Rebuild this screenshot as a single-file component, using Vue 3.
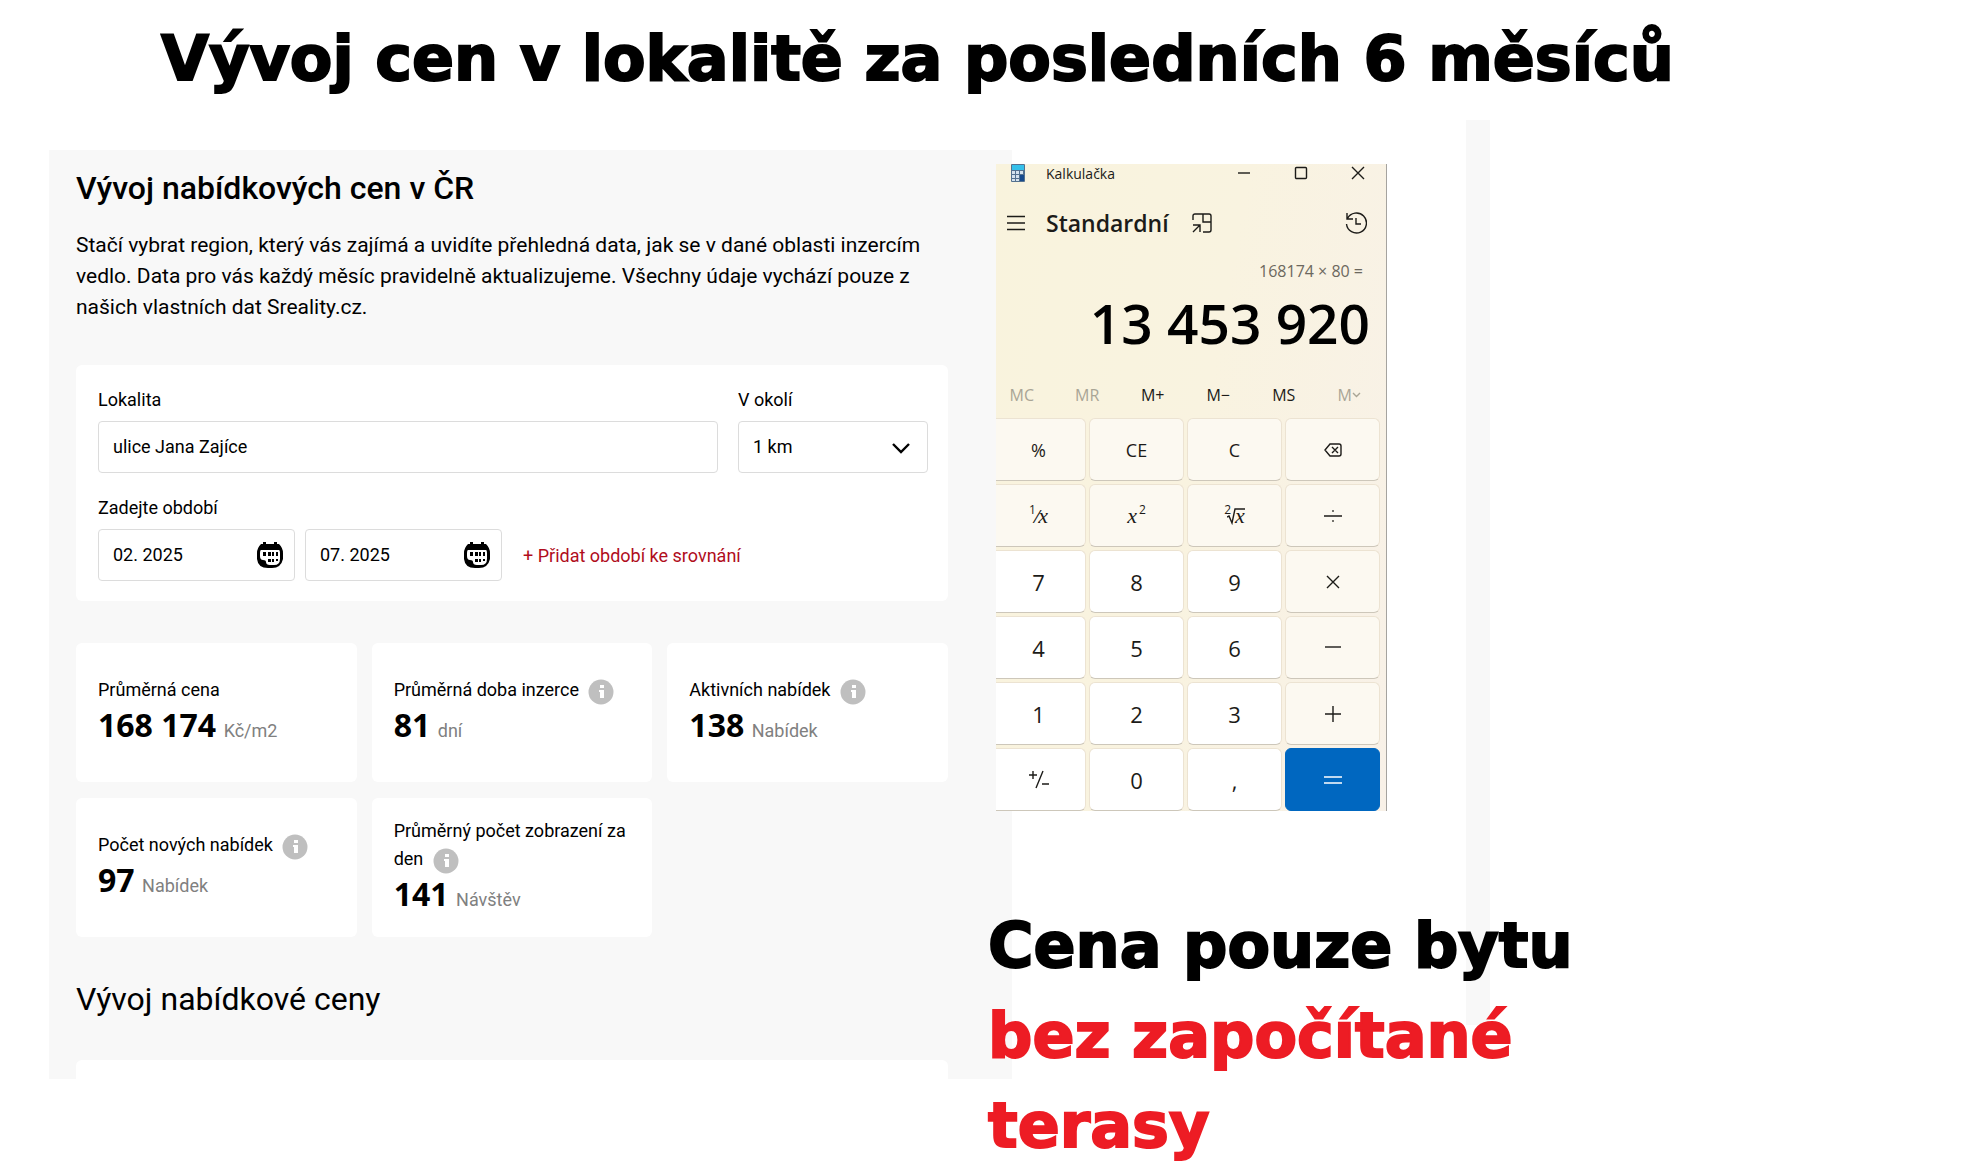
<template>
  <div class="page">
    <h1 class="headline">Vývoj cen v lokalitě za posledních 6 měsíců</h1>

    <div class="board">
      <main class="panel">
        <h2 class="panel-title">Vývoj nabídkových cen v ČR</h2>
        <p class="intro">
          Stačí vybrat region, který vás zajímá a uvidíte přehledná data, jak se v dané oblasti inzercím
          vedlo. Data pro vás každý měsíc pravidelně aktualizujeme. Všechny údaje vychází pouze z
          našich vlastních dat Sreality.cz.
        </p>

        <form class="card filter" @submit.prevent>
          <div class="filter-row">
            <div class="field field-wide">
              <label for="locality">Lokalita</label>
              <input id="locality" v-model="locality" class="control" type="text" />
            </div>
            <div class="field field-radius">
              <label for="radius">V okolí</label>
              <div class="select-wrap">
                <select id="radius" v-model="radius" class="control">
                  <option v-for="r in radiusOptions" :key="r">{{ r }}</option>
                </select>
                <svg class="chevron" viewBox="0 0 18 12" width="18" height="12">
                  <path d="M1 2l8 8 8-8" fill="none" stroke="#000" stroke-width="2.400" />
                </svg>
              </div>
            </div>
          </div>

          <label for="period-0">Zadejte období</label>
          <div class="periods">
            <div v-for="(p, i) in periods" :key="i" class="period">
              <input :id="'period-' + i" v-model="periods[i]" class="control" type="text" :aria-label="i ? 'Konec období' : null" />
              <svg class="calendar" viewBox="0 0 26 26" width="26" height="26">
                <path d="M4 2h2V0h3v2h8V0h3v2h2q4 4 4 9v6q-2 9-11 9h-4Q1 26 0 17v-6q0-5 4-9z" fill="#000" />
                <path d="M4 8h18q1 0 1 3v6q0 6-6 6h-4q-4 0-4-3 0-2-3-2-3 0-3-4v-3q0-3 1-3z" fill="#fff" />
                <path d="M6 10h3v4H6zM11 10h3v4h-3zM15 10h2v4h-2zM19 10h2v4h-2zM11 17h3v3h-3zM15 17h2v3h-2zM19 17h2v2h-2z" fill="#000" />
              </svg>
            </div>
            <a href="#" class="add-period" @click.prevent="addPeriod">+ Přidat období ke srovnání</a>
          </div>
        </form>

        <div class="stats">
          <div v-for="s in stats" :key="s.label" class="card stat">
            <div class="stat-label">
              {{ s.label }}
              <svg v-if="s.info" class="info" viewBox="0 0 26 26" width="26" height="26">
                <circle cx="13" cy="13" r="12.5" fill="#bfbfbf" />
                <path d="M12 6h4v3h-4zM11 11h5v8h-4v-6h-1z" fill="#fff" />
              </svg>
            </div>
            <div class="stat-value">
              <strong>{{ s.value }}</strong> <span>{{ s.unit }}</span>
            </div>
          </div>
        </div>

        <h2 class="chart-title">Vývoj nabídkové ceny</h2>
        <div class="card chart"></div>
      </main>

      <div class="strip"></div>

      <aside class="side">
        <section class="calc">
          <header class="calc-bar">
            <svg class="calc-logo" viewBox="0 0 14 18" width="14" height="18">
              <rect width="14" height="18" rx="1" fill="#54718f" />
              <rect x="1" y="1" width="12" height="5" fill="#35c0ea" />
              <path d="M1 7h3v3H1zM5 7h3v3H5zM9 7h3v3H9zM1 11h3v3H1zM5 11h3v3H5zM1 15h3v2H1zM5 15h3v2H5z" fill="#d5e2ee" />
              <path d="M9 11h4v6H9z" fill="#174a8c" />
            </svg>
            <span class="calc-name">Kalkulačka</span>
            <button class="win-btn" aria-label="Minimalizovat">
              <svg viewBox="0 0 14 14" width="14" height="14"><path d="M1 7h12" /></svg>
            </button>
            <button class="win-btn" aria-label="Maximalizovat">
              <svg viewBox="0 0 14 14" width="14" height="14"><rect x="1.5" y="1.5" width="11" height="11" rx="1" /></svg>
            </button>
            <button class="win-btn" aria-label="Zavřít">
              <svg viewBox="0 0 14 14" width="14" height="14"><path d="M1 1l12 12M13 1L1 13" /></svg>
            </button>
          </header>

          <div class="calc-mode">
            <button class="icon-btn" aria-label="Nabídka">
              <svg viewBox="0 0 20 20" width="20" height="20"><path d="M1 3.500h18M1 10h18M1 16.500h18" /></svg>
            </button>
            <span class="mode-name">Standardní</span>
            <button class="icon-btn" aria-label="Vždy navrchu">
              <svg viewBox="0 0 20 20" width="20" height="20">
                <path d="M1 7V3q0-2 2-2h14q2 0 2 2v14q0 2-2 2h-6M11 1v8h8M1 19l7-7M1 12h7v7" />
              </svg>
            </button>
            <button class="icon-btn history" aria-label="Historie">
              <svg viewBox="0 0 22 22" width="22" height="22">
                <path d="M2 1v6h6M2.500 6.500A10 10 0 1 1 1.500 12M11 6v6h5" />
              </svg>
            </button>
          </div>

          <div class="expression">{{ expression }}</div>
          <output class="display">{{ display }}</output>

          <div class="memory">
            <button v-for="m in memory" :key="m.text" :disabled="m.off">
              {{ m.text }}<svg v-if="m.arrow" viewBox="0 0 9 6" width="9" height="6"><path d="M1 1l3.500 3.500L8 1" /></svg>
            </button>
          </div>

          <div class="keys">
            <button v-for="k in keys" :key="k.id" class="key" :class="k.kind" :aria-label="k.id">
              <svg v-if="k.path" viewBox="0 0 20 20" width="20" height="20"><path :d="k.path" /></svg>
              <template v-else-if="k.id === '1/x'"><sup>1</sup>⁄<i>x</i></template>
              <template v-else-if="k.id === 'x2'"><i>x</i><sup class="pow">2</sup></template>
              <template v-else-if="k.id === 'sqrt'">
                <sup>2</sup>
                <svg class="root" viewBox="0 0 18 18" width="18" height="18"><path d="M0 10l2-1 3 7L8 2h10" /></svg>
                <i>x</i>
              </template>
              <template v-else>{{ k.id }}</template>
            </button>
          </div>
        </section>

        <p class="note">
          Cena pouze bytu<br />
          <span class="red">bez započítané<br />terasy</span>
        </p>
      </aside>
    </div>
  </div>
</template>

<script setup>
import { ref } from 'vue'

const locality = ref('ulice Jana Zajíce')
const radius = ref('1 km')
const radiusOptions = ['1 km', '2 km', '5 km', '10 km']
const periods = ref(['02. 2025', '07. 2025'])

const stats = [
  { label: 'Průměrná cena', value: '168 174', unit: 'Kč/m2' },
  { label: 'Průměrná doba inzerce', value: '81', unit: 'dní', info: true },
  { label: 'Aktivních nabídek', value: '138', unit: 'Nabídek', info: true },
  { label: 'Počet nových nabídek', value: '97', unit: 'Nabídek', info: true },
  { label: 'Průměrný počet zobrazení za den', value: '141', unit: 'Návštěv', info: true },
]

const expression = ref('168174 × 80 =')
const display = ref('13 453 920')

const memory = [
  { text: 'MC', off: true },
  { text: 'MR', off: true },
  { text: 'M+' },
  { text: 'M−' },
  { text: 'MS' },
  { text: 'M', off: true, arrow: true },
]

// Keys with a path are drawn as icons, the rest as text
const keys = [
  { id: '%', kind: 'fn' },
  { id: 'CE', kind: 'fn' },
  { id: 'C', kind: 'fn' },
  { id: 'backspace', kind: 'fn', path: 'M7 4h9q2 0 2 2v8q0 2-2 2H7l-5-6zM9 7l6 6M15 7l-6 6' },
  { id: '1/x', kind: 'fn' },
  { id: 'x2', kind: 'fn' },
  { id: 'sqrt', kind: 'fn' },
  { id: '÷', kind: 'fn', path: 'M1 10h18M9.200 5h1.600M9.200 15h1.600' },
  { id: '7', kind: 'num' },
  { id: '8', kind: 'num' },
  { id: '9', kind: 'num' },
  { id: '×', kind: 'fn', path: 'M4 4l12 12M16 4L4 16' },
  { id: '4', kind: 'num' },
  { id: '5', kind: 'num' },
  { id: '6', kind: 'num' },
  { id: '−', kind: 'fn', path: 'M2 9h16' },
  { id: '1', kind: 'num' },
  { id: '2', kind: 'num' },
  { id: '3', kind: 'num' },
  { id: '+', kind: 'fn', path: 'M2 10h16M10 2v16' },
  { id: '+/−', kind: 'num', path: 'M0 5h8M4 1v8M14 1L7 18M13 14h8' },
  { id: '0', kind: 'num' },
  { id: ',', kind: 'num' },
  { id: '=', kind: 'equals', path: 'M1 7h18M1 13h18' },
]

function addPeriod() {
  periods.value.push('')
}
</script>

<style>
body {
  background: #fff;
}
</style>

<style scoped>
.page {
  font-family: Roboto, "Liberation Sans", sans-serif;
  color: #000;
  overflow: hidden;
}

h1, h2, p {
  margin: 0;
}

.headline,
.note {
  font-family: "DejaVu Sans", sans-serif;
  font-size: 62px;
  font-weight: 700;
  line-height: 90px;
  white-space: nowrap;
  -webkit-text-stroke: 2px currentColor;
}

.headline {
  padding: 14px 0 0 161px;
  height: 106px;
}

.board {
  display: grid;
  grid-template-columns: 963fr 454fr 24px 494fr;
  padding-left: 49px;
}

.panel {
  grid-column: 1;
  grid-row: 1;
  align-self: start;
  margin-top: 30px;
  padding: 18px 64px 0 27px;
  background: #f8f8f8;
}

.panel-title {
  font-size: 32px;
  font-weight: 500;
  line-height: 40px;
}

.intro {
  margin-top: 22px;
  font-size: 21px;
  line-height: 31px;
}

.card {
  background: #fff;
  border-radius: 6px;
}

.filter {
  margin-top: 42px;
  padding: 23px 20px 20px 22px;
  font-size: 18px;
}

.filter-row {
  display: flex;
  gap: 20px;
  margin-bottom: 23px;
}

.field-wide {
  flex: 1;
}

.field-radius {
  flex: 0 0 190px;
}

label {
  display: block;
  line-height: 24px;
  margin-bottom: 9px;
}

.control {
  display: block;
  width: 100%;
  height: 52px;
  box-sizing: border-box;
  padding: 0 14px 2px;
  border: 1px solid #dcdcdc;
  border-radius: 4px;
  background: #fff;
  color: #000;
  font: inherit;
  appearance: none;
}

.select-wrap,
.period {
  position: relative;
}

.chevron {
  position: absolute;
  right: 18px;
  top: 21px;
  pointer-events: none;
}

.periods {
  display: flex;
  align-items: center;
  gap: 10px;
}

.period {
  width: 197px;
}

.calendar {
  position: absolute;
  right: 12px;
  top: 13px;
  pointer-events: none;
}

.add-period {
  margin-left: 11px;
  color: #b00d1c;
  text-decoration: none;
}

.stats {
  display: grid;
  grid-template-columns: repeat(3, 1fr);
  grid-auto-rows: 139px;
  gap: 16px 15px;
  margin-top: 42px;
}

.stat {
  display: flex;
  flex-direction: column;
  justify-content: center;
  padding: 2px 16px 0 22px;
}

.stat-label {
  font-size: 18px;
  line-height: 28px;
}

.info {
  margin: -8px 0 -8px 5px;
  vertical-align: -1px;
}

.stat-value {
  font-size: 18px;
  line-height: 42px;
  color: #808080;
}

.stat-value strong {
  margin-right: 3px;
  font-family: "Noto Sans", sans-serif;
  font-size: 32px;
  font-weight: 700;
  color: #000;
}

.chart-title {
  margin-top: 42px;
  font-size: 32px;
  font-weight: 400;
  line-height: 40px;
}

.chart {
  height: 19px;
  margin-top: 41px;
  border-radius: 6px 6px 0 0;
}

.strip {
  grid-column: 3;
  grid-row: 1;
  height: 905px;
  background: #f8f8f8;
}

.side {
  grid-column: 2 / -1;
  grid-row: 1;
  margin-left: -24px;
  z-index: 1;
}

.calc {
  display: flex;
  flex-direction: column;
  width: 391px;
  height: 647px;
  box-sizing: border-box;
  margin: 44px 0 0 8px;
  overflow: hidden;
  border-right: 1px solid #a5a39f;
  background: linear-gradient(100deg, #f9f3dd 0%, #f9f3e0 50%, #f8f1e8 100%);
  color: #1c1b18;
  font-family: "Open Sans", "Noto Sans", sans-serif;
}

.calc button {
  display: flex;
  align-items: center;
  justify-content: center;
  padding: 0;
  border: 0;
  background: none;
  color: inherit;
  font: inherit;
}

.calc button svg {
  fill: none;
  stroke: currentColor;
  stroke-width: 1.4;
}

.calc-bar {
  display: flex;
  align-items: flex-start;
  padding-left: 15px;
  height: 41px;
}

.calc-name {
  flex: 1;
  margin-left: 21px;
  font-size: 14px;
  line-height: 20px;
}

.calc .win-btn {
  width: 57px;
  height: 17px;
}

.calc-mode {
  display: flex;
  align-items: center;
  height: 36px;
  padding: 0 19px 0 10px;
}

.mode-name {
  margin: 0 23px 0 20px;
  font-size: 23px;
  font-weight: 600;
}

.history {
  margin-left: auto;
}

.expression {
  margin-top: 16px;
  padding-right: 23px;
  color: #6c685e;
  font-size: 16px;
  line-height: 28px;
  text-align: right;
}

.display {
  padding-right: 16px;
  color: #000;
  font-size: 55px;
  font-weight: 600;
  line-height: 76px;
  text-align: right;
}

.memory {
  display: grid;
  grid-template-columns: repeat(6, 1fr);
  height: 47px;
  padding-top: 10px;
  margin: 0 4px 0 -7px;
  font-size: 16px;
}

.calc .memory button:disabled {
  color: #a9a596;
}

.keys {
  display: grid;
  grid-template-columns: repeat(4, 1fr);
  grid-auto-rows: 63px;
  gap: 3px;
  margin: 0 6px 0 -5px;
}

.calc .key {
  box-sizing: border-box;
  border: 1px solid #ece3d2;
  border-bottom-color: #cdc7ba;
  border-radius: 6px;
  font-size: 22px;
}

.calc .key.fn {
  background: #fcf9f1;
  font-size: 18px;
}

.calc .key.num {
  background: #fff;
}

.calc .key.equals {
  border-color: #0067c0;
  background: #0067c0;
  color: #fff;
}

.key i {
  font-family: "Liberation Serif", serif;
  font-size: 22px;
}

.key sup {
  font-size: 12px;
  line-height: 12px;
  align-self: center;
  margin-bottom: 12px;
}

.key .pow {
  margin-left: 2px;
}

.key .root {
  margin: 0 -10px 0 -4px;
}

.note {
  margin-top: 90px;
}

.red {
  color: #ed1c24;
  -webkit-text-stroke-color: #ed1c24;
}
</style>
